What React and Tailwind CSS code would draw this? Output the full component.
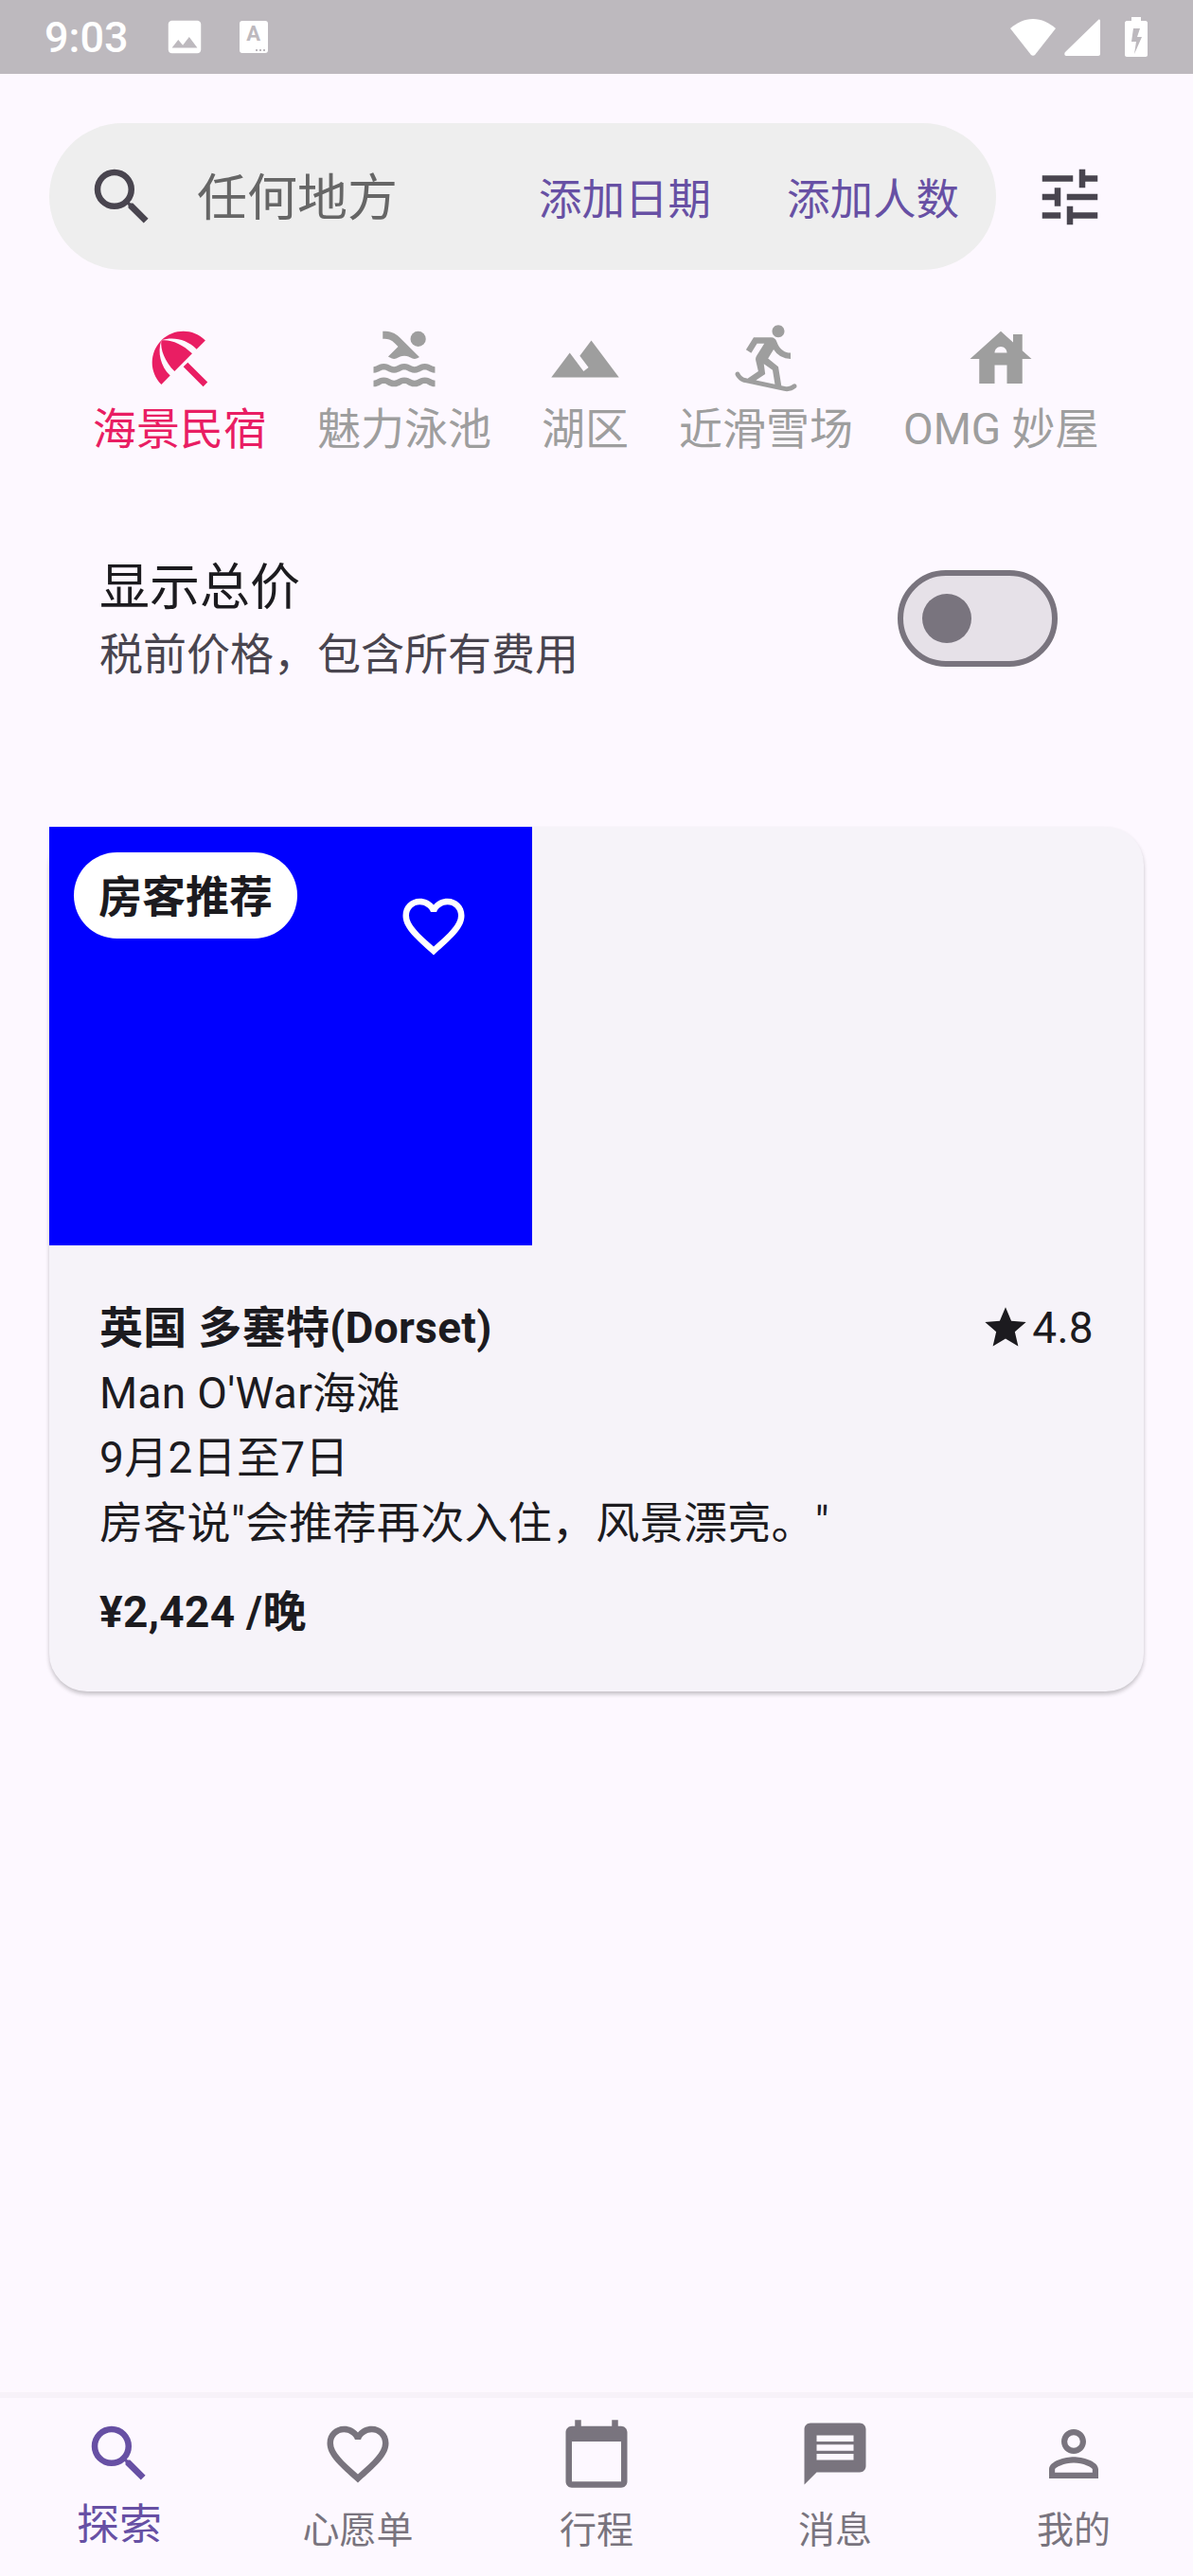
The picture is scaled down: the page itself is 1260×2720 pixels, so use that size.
import React from "react";
import {
  MdSearch,
  MdTune,
  MdBeachAccess,
  MdPool,
  MdLandscape,
  MdSnowboarding,
  MdHouse,
  MdFavoriteBorder,
  MdStar,
  MdCalendarToday,
  MdMessage,
  MdPersonOutline,
  MdImage,
} from "react-icons/md";

const fontStack = "font-['Roboto','Noto_Sans_CJK_SC',sans-serif]";

const tabs = [
  { label: "海景民宿", Icon: MdBeachAccess, active: true },
  { label: "魅力泳池", Icon: MdPool },
  { label: "湖区", Icon: MdLandscape },
  { label: "近滑雪场", Icon: MdSnowboarding },
  { label: "OMG 妙屋", Icon: MdHouse },
];

const navItems = [
  { label: "探索", Icon: MdSearch, active: true },
  { label: "心愿单", Icon: MdFavoriteBorder },
  { label: "行程", Icon: MdCalendarToday },
  { label: "消息", Icon: MdMessage },
  { label: "我的", Icon: MdPersonOutline },
];

const StatusBar = () => (
  <div className="h-[78px] shrink-0 bg-[#bdb9be] flex items-center text-white pl-[47px] pr-[48px]">
    <span className="text-[45px] leading-none font-medium">9:03</span>
    <MdImage size={46} className="ml-[36px]" />
    <span className="ml-[35px] relative w-[30px] h-[34px] bg-white rounded-[3px] flex justify-center text-[#bdb9be] text-[22px] leading-[28px] font-bold">
      A
      <span className="absolute bottom-[2px] right-[3px] flex gap-[2px]">
        <span className="w-[2px] h-[2px] bg-[#bdb9be]" />
        <span className="w-[2px] h-[2px] bg-[#bdb9be]" />
        <span className="w-[2px] h-[2px] bg-[#bdb9be]" />
      </span>
    </span>
    <div className="ml-auto flex items-center">
      <svg width="50" height="42" viewBox="0 0 50 42" fill="white">
        <path d="M1 12C8 6 16 2 25 2s17 4 24 10L27 40c-1 1-3 1-4 0z" />
      </svg>
      <svg width="38" height="40" viewBox="0 0 38 40" fill="white" className="ml-[8px]">
        <path d="M1 36 36 2c1-1 2 0 2 1v35c0 1-1 2-2 2H2c-2 0-2-3-1-4z" />
      </svg>
      <svg width="24" height="42" viewBox="0 0 24 42" fill="white" className="ml-[26px]">
        <path
          fillRule="evenodd"
          d="M7 0h10v4h5c1 0 2 1 2 2v34c0 1-1 2-2 2H2c-1 0-2-1-2-2V6c0-1 1-2 2-2h5zM9 12l-2 14h5l-2 13 8-18h-5l3-9z"
        />
      </svg>
    </div>
  </div>
);

const SearchRow = () => (
  <div className="flex items-center mt-[52px] pl-[52px]">
    <div className="w-[1000px] h-[155px] rounded-full bg-[#eeeeee] flex items-center pl-[38px] pr-[39px]">
      <MdSearch size={78} className="text-[#49454f] shrink-0" />
      <span className="ml-[40px] mt-[6px] text-[53px] leading-none text-[#666666]">任何地方</span>
      <span className="ml-auto mt-[8px] text-[45.5px] leading-none text-[#6750a4]">添加日期</span>
      <span className="ml-[80px] mt-[8px] text-[45.5px] leading-none text-[#6750a4]">添加人数</span>
    </div>
    <MdTune size={78} className="text-[#49454f] ml-[39px]" />
  </div>
);

const CategoryTabs = () => (
  <div className="flex gap-[53px] pl-[98px] mt-[55px]">
    {tabs.map(({ label, Icon, active }) => (
      <div
        key={label}
        className={`flex flex-col items-center ${active ? "text-[#e91e63]" : "text-[#9e9e9e]"}`}
      >
        <Icon size={78} />
        <span className="text-[46px] leading-[54px] whitespace-nowrap mt-[8px]">{label}</span>
      </div>
    ))}
  </div>
);

const TotalPriceToggle = () => (
  <div className="flex items-center justify-between pl-[105px] pr-[143px] mt-[105px]">
    <div>
      <p className="text-[53px] leading-[72px] text-[#1c1b1f]">显示总价</p>
      <p className="text-[46px] leading-[68px] text-[#49454f]">税前价格，包含所有费用</p>
    </div>
    <div className="w-[169px] h-[102px] mb-[4px] rounded-full border-[6px] border-[#79747e] bg-[#e6e1e8] flex items-center pl-[20px]">
      <span className="w-[52px] h-[52px] rounded-full bg-[#79747e]" />
    </div>
  </div>
);

const ListingCard = () => (
  <div className="mx-[52px] mt-[148px] rounded-[40px] bg-[#f6f3f9] shadow-[0_3px_4px_rgba(0,0,0,0.22)]">
    <div className="relative w-[510px] h-[442px] bg-[#0000ff]">
      <span className="absolute left-[26px] top-[27px] h-[91px] px-[26px] pt-[3px] rounded-full bg-white flex items-center text-[46px] font-bold text-[#1c1b1f]">
        房客推荐
      </span>
      <MdFavoriteBorder size={78} className="absolute left-[367px] top-[66px] text-white" />
    </div>
    <div className="px-[53px] pt-[53px] pb-[49px] text-[#1c1b1f] text-[46px] leading-[68.5px] tracking-[0.3px]">
      <div className="flex justify-between">
        <span className="font-bold">英国 多塞特(Dorset)</span>
        <span className="flex items-center">
          <MdStar size={52} className="mr-[2px]" />
          4.8
        </span>
      </div>
      <p>Man O'War海滩</p>
      <p>9月2日至7日</p>
      <p>房客说"会推荐再次入住，风景漂亮。"</p>
      <p className="font-bold mt-[26px]">¥2,424 /晚</p>
    </div>
  </div>
);

const BottomNav = () => (
  <div className="mt-auto h-[194px] shrink-0 grid grid-cols-5 border-t-[6px] border-[#f7f2f9]">
    {navItems.map(({ label, Icon, active }) => (
      <div
        key={label}
        className={`flex flex-col items-center pt-[20px] ${active ? "text-[#6750a4]" : "text-[#79747e]"}`}
      >
        <Icon size={78} />
        <span className={active ? "text-[45px] leading-[52px] mt-[11px]" : "text-[39px] leading-[46px] mt-[19px]"}>
          {label}
        </span>
      </div>
    ))}
  </div>
);

export default function App() {
  return (
    <div className={`w-[1260px] h-[2720px] flex flex-col bg-[#fdf8ff] overflow-hidden ${fontStack}`}>
      <StatusBar />
      <SearchRow />
      <CategoryTabs />
      <TotalPriceToggle />
      <ListingCard />
      <BottomNav />
    </div>
  );
}
